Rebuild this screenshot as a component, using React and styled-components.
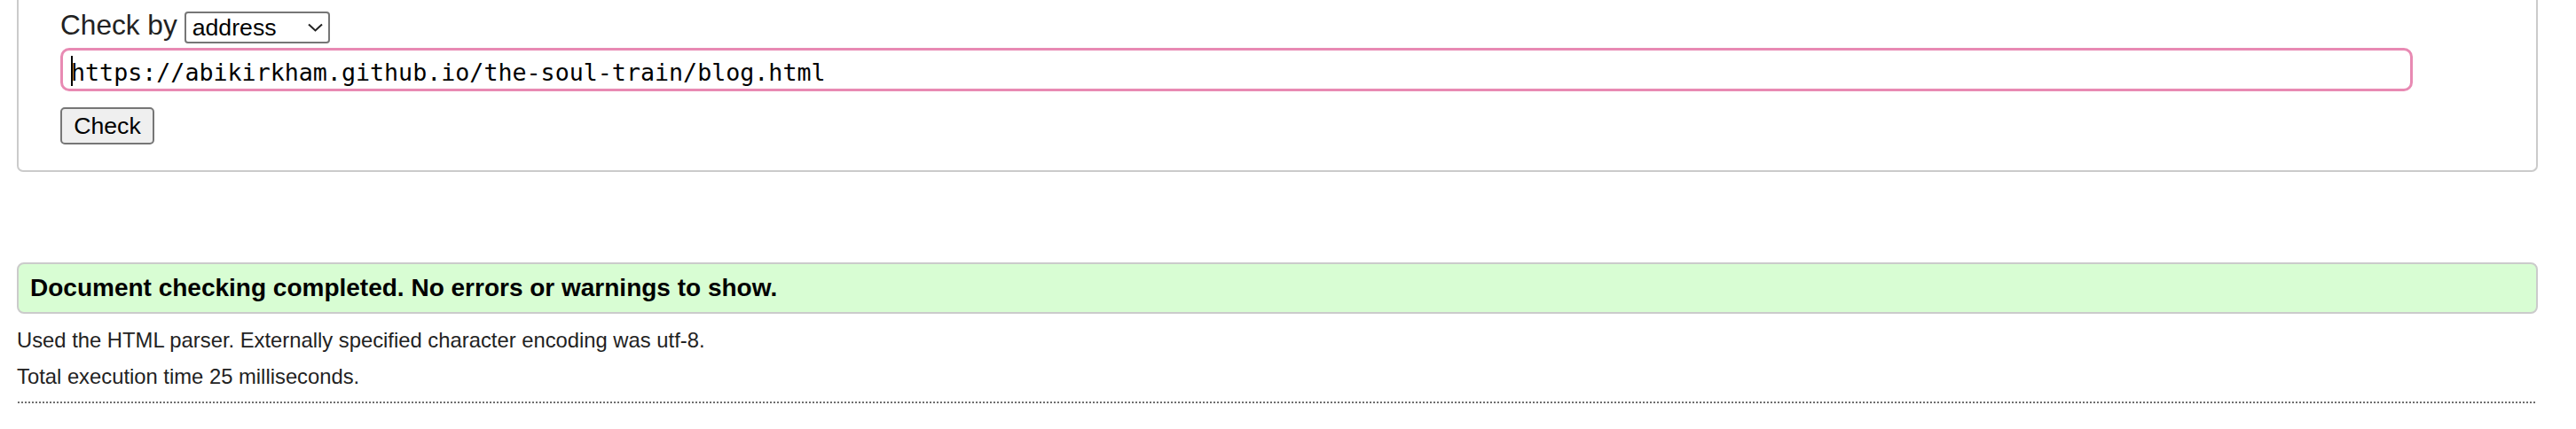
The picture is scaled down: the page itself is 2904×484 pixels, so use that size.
import styled, { createGlobalStyle } from 'styled-components'

const GlobalStyle = createGlobalStyle`
  body {
    margin: 0;
    background: #fff;
    font-family: "Liberation Sans", Arial, sans-serif;
    color: #222;
  }
`

export default function App() {
  return (
    <>
      <GlobalStyle />
      <Page>
        <Form>
          <Row>
            <Label>Check by</Label>
            <SelectWrap>
              <Select defaultValue="address">
                <option value="address">address</option>
                <option value="upload">file upload</option>
                <option value="text">text input</option>
              </Select>
              <Chevron width="17" height="10" viewBox="0 0 17 10">
                <polyline points="1,1.5 8.5,8.5 16,1.5" fill="none" stroke="#222" strokeWidth="2" />
              </Chevron>
            </SelectWrap>
          </Row>
          <UrlWrap>
            <UrlInput type="url" defaultValue="https://abikirkham.github.io/the-soul-train/blog.html" />
            <Caret />
          </UrlWrap>
          <CheckButton type="button">Check</CheckButton>
        </Form>

        <Success>Document checking completed. No errors or warnings to show.</Success>
        <Details>
          <Info>Used the HTML parser. Externally specified character encoding was utf-8.</Info>
          <Info>Total execution time 25 milliseconds.</Info>
        </Details>
        <Rule />
      </Page>
    </>
  )
}

const Page = styled.div`
  padding: 0 43px 0 19px;
`

const Form = styled.fieldset`
  margin: 0;
  padding: 13px 0 29px 47px;
  border: 2px solid #cbcbcb;
  border-top: none;
  border-radius: 0 0 7px 7px;
  display: flex;
  flex-direction: column;
  align-items: flex-start;
`

const Row = styled.div`
  display: flex;
  align-items: flex-start;
  gap: 8px;
`

const Label = styled.span`
  font-size: 31.6px;
  line-height: 31px;
  color: #222;
`

const SelectWrap = styled.div`
  position: relative;
`

const Select = styled.select`
  appearance: none;
  box-sizing: border-box;
  width: 164px;
  height: 36px;
  padding: 0 0 0 7px;
  border: 2px solid #767676;
  border-radius: 4px;
  background: #fff;
  color: #000;
  font-family: "Liberation Sans", Arial, sans-serif;
  font-size: 26.67px;
  outline: none;
`

const Chevron = styled.svg`
  position: absolute;
  left: 139px;
  top: 13px;
  pointer-events: none;
`

const UrlWrap = styled.div`
  position: relative;
  margin-top: 5px;
  align-self: stretch;
  margin-right: 139px;
`

const UrlInput = styled.input`
  box-sizing: border-box;
  display: block;
  width: 100%;
  height: 49px;
  padding: 6px 0 0 9px;
  border: 3px solid #e88ab3;
  border-radius: 10px;
  background: #fff;
  color: #000;
  font-family: "DejaVu Sans Mono", Menlo, monospace;
  font-size: 26.67px;
  outline: none;
`

const Caret = styled.span`
  position: absolute;
  left: 12px;
  top: 9px;
  width: 2px;
  height: 34px;
  background: #000;
`

const CheckButton = styled.button`
  box-sizing: border-box;
  margin-top: 18px;
  width: 106px;
  height: 42px;
  padding: 0;
  border: 2px solid #767676;
  border-radius: 5px;
  background: #efefef;
  color: #000;
  font-family: "Liberation Sans", Arial, sans-serif;
  font-size: 26.67px;
`

const Success = styled.p`
  margin: 102px 0 0;
  padding: 12px 13px;
  border: 2px solid #cbcbcb;
  border-radius: 8px;
  background: #d8fdd3;
  color: #000;
  font-size: 28px;
  font-weight: bold;
  line-height: 30px;
`

const Details = styled.div`
  margin-top: 9px;
`

const Info = styled.p`
  margin: 0;
  font-size: 23.8px;
  line-height: 41px;
  color: #222;
`

const Rule = styled.div`
  margin-top: 8px;
  height: 2px;
  margin-right: 1px;
  margin-left: 1px;
  background-image: repeating-linear-gradient(to right, #6f6f6f 0 2px, transparent 2px 4px);
`
